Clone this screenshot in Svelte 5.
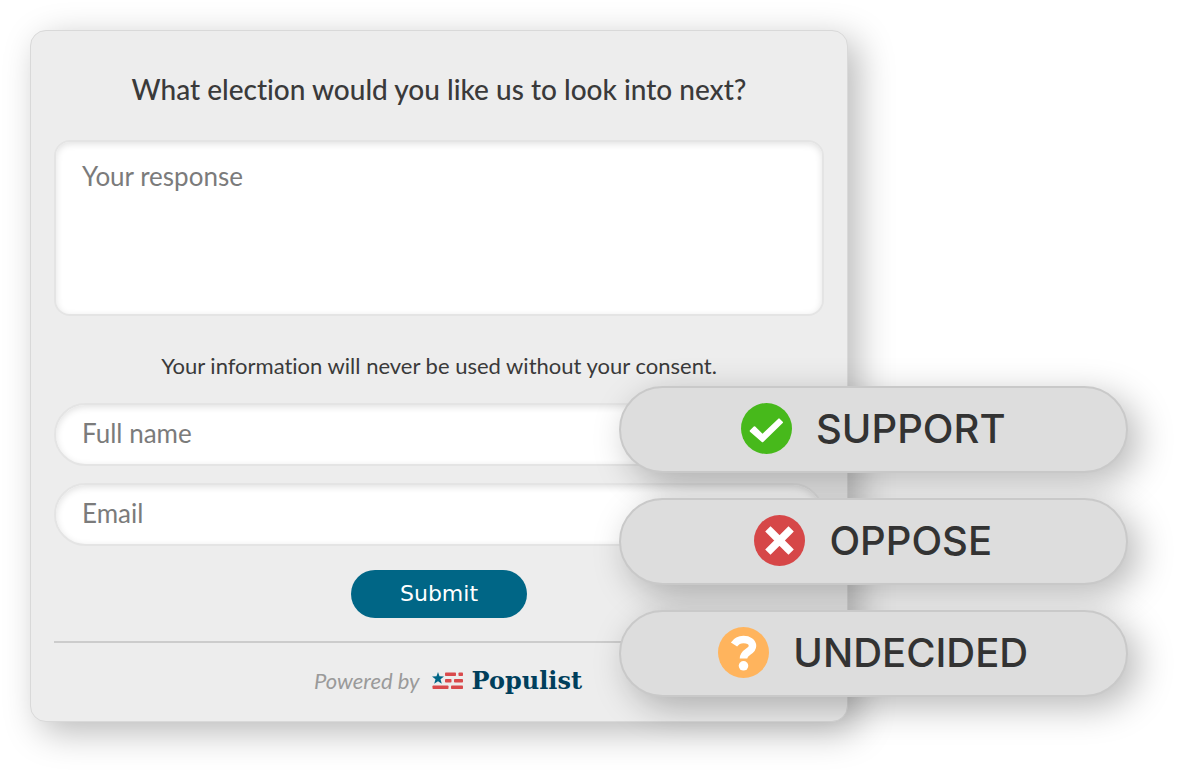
<script>
  const stances = [
    { name: 'Support', icon: 'check', color: '#47b91b' },
    { name: 'Oppose', icon: 'cross', color: '#d64748' },
    { name: 'Undecided', icon: 'question', color: '#ffb45d' }
  ];

  let response = $state('');
  let fullName = $state('');
  let email = $state('');
</script>

<main>
  <form class="card" onsubmit={(e) => e.preventDefault()}>
    <label class="title" for="response">What election would you like us to look into next?</label>
    <textarea id="response" placeholder="Your response" bind:value={response}></textarea>
    <p class="consent">Your information will never be used without your consent.</p>
    <div class="fields">
      <input type="text" aria-label="Full name" placeholder="Full name" bind:value={fullName} />
      <input type="email" aria-label="Email" placeholder="Email" bind:value={email} />
    </div>
    <button class="submit" type="submit">Submit</button>
    <footer>
      <span class="powered">Powered by</span>
      <a class="brand" href="#populist">
        <svg class="flag" viewBox="0 0 32 18" aria-hidden="true">
          <path fill="#006686" d="M6 0 7.500 4.200 12 4.500 8.500 7.300 9.800 11.800 6 9.300 2.200 11.800 3.500 7.300 0 4.500 4.500 4.200Z" />
          <g fill="#d94a4c">
            <rect x="13" y="0.500" width="11" height="3.500" rx="0.8" />
            <rect x="26.500" y="0.500" width="4.500" height="3.500" rx="0.8" />
            <rect x="13" y="7" width="6.500" height="3.500" rx="0.8" />
            <rect x="22" y="7" width="9" height="3.500" rx="0.8" />
            <rect x="0.500" y="13.500" width="16" height="3.500" rx="0.8" />
            <rect x="19" y="13.500" width="12" height="3.500" rx="0.8" />
          </g>
        </svg>
        <span>Populist</span>
      </a>
    </footer>
  </form>

  <div class="stances">
    {#each stances as stance}
      <button class="stance" type="button">
        <svg class="badge" viewBox="0 0 51 51" aria-hidden="true">
          <circle cx="25.500" cy="25.500" r="25.500" fill={stance.color} />
          {#if stance.icon === 'check'}
            <path d="M9 27.300 12.800 23.500Q13.500 22.800 14.200 23.500L21.500 30.700 37.300 15.700Q38 15 38.700 15.700L41.700 18.700Q42.400 19.400 41.700 20.100L22.200 38.900Q21.500 39.600 20.800 38.900L9 28.700Q8.300 28 9 27.300Z" fill="#fff" />
          {:else if stance.icon === 'cross'}
            <path d="M16.500 16.500 34.500 34.500M34.500 16.500 16.500 34.500" fill="none" stroke="#fff" stroke-width="7.500" stroke-linecap="square" stroke-linejoin="round" />
          {:else}
            <path d="M16 17.500C18.500 13.800 21.500 12.500 25.500 12.500C30.500 12.500 34.500 15 34.500 19C34.500 25 25.500 24.500 25.500 31.500" fill="none" stroke="#fff" stroke-width="7.500" />
            <circle cx="25.500" cy="38.800" r="4.800" fill="#fff" />
          {/if}
        </svg>
        <span>{stance.name}</span>
      </button>
    {/each}
  </div>
</main>

<style>
  :global(body) {
    margin: 0;
    background: #fff;
  }

  main {
    display: grid;
    padding: 30px 76px 50px 30px;
    font-family: Lato, sans-serif;
    font-variant-ligatures: none;
    color: #3a3a3a;
  }

  .card,
  .stances {
    grid-area: 1 / 1;
    box-sizing: border-box;
  }

  .card {
    width: 74.5%;
    padding: 40px 23px 20px;
    display: flex;
    flex-direction: column;
    background: #ededed;
    border: 1px solid #d9d9d9;
    border-radius: 16px;
    box-shadow: 10px 10px 36px rgba(0, 0, 0, 0.28);
  }

  .title {
    font-size: 28px;
    font-weight: 500;
    line-height: 36px;
    text-align: center;
  }

  textarea,
  input {
    display: block;
    box-sizing: border-box;
    width: 100%;
    margin: 0;
    padding: 0 26px;
    border: 2px solid #e4e4e4;
    background: #fff;
    box-shadow: inset 0 2px 7px rgba(0, 0, 0, 0.12);
    font: 400 26px/32px Lato, sans-serif;
    color: #3a3a3a;
    outline: none;
  }

  textarea {
    height: 176px;
    margin-top: 33px;
    padding-top: 18px;
    border-radius: 16px;
    resize: none;
  }

  input {
    height: 63px;
    padding-bottom: 4px;
    border-radius: 32px;
  }

  textarea::placeholder,
  input::placeholder {
    color: #7b7b7b;
    opacity: 1;
  }

  .consent {
    margin: 35px 0 22px;
    font-size: 22px;
    line-height: 30px;
    text-align: center;
  }

  .fields {
    display: grid;
    gap: 17px;
  }

  .submit {
    align-self: center;
    width: 176px;
    height: 48px;
    margin: 24px 0 23px;
    padding: 0;
    border: 0;
    border-radius: 24px;
    background: #006686;
    color: #fff;
    font: 400 22px/30px "DejaVu Sans", sans-serif;
    cursor: pointer;
  }

  footer {
    display: flex;
    align-items: center;
    justify-content: center;
    gap: 12px;
    padding: 19px 0 1px 18px;
    border-top: 2px solid #cccccc;
    line-height: 38px;
  }

  .powered {
    font-size: 22px;
    font-style: italic;
    color: #9a9a9a;
  }

  .brand {
    display: flex;
    align-items: center;
    gap: 8px;
    color: #003f5c;
    font: 700 24px/38px "DejaVu Serif", serif;
    text-decoration: none;
  }

  .flag {
    width: 32px;
    height: 18px;
  }

  .stances {
    justify-self: end;
    align-self: end;
    width: 46.4%;
    margin-bottom: 25px;
    display: grid;
    gap: 25px;
  }

  .stance {
    display: flex;
    align-items: center;
    justify-content: center;
    gap: 24px;
    height: 87px;
    padding: 0 0 2px;
    border: 2px solid #c9c9c9;
    border-radius: 44px;
    background: #dddddd;
    box-shadow: 10px 10px 36px rgba(0, 0, 0, 0.28);
    color: #333;
    font: 500 40px/44px Inter, sans-serif;
    text-transform: uppercase;
    cursor: pointer;
  }

  .badge {
    width: 51px;
    height: 51px;
  }
</style>
